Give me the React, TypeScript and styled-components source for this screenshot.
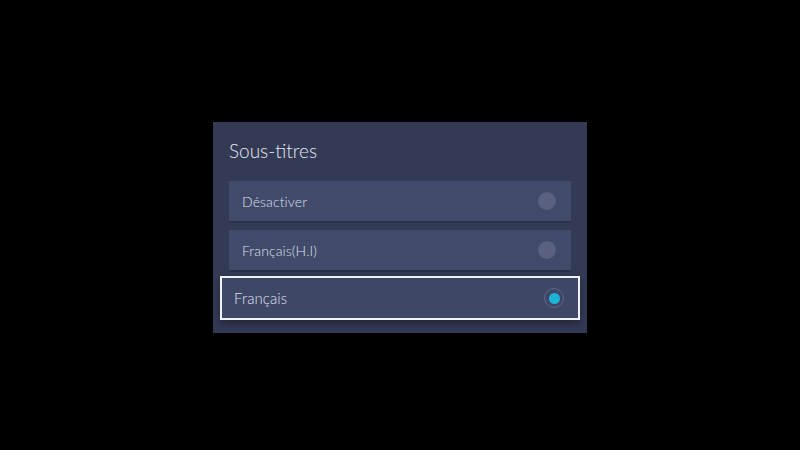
import React, { useState } from 'react';
import styled, { createGlobalStyle } from 'styled-components';

const GlobalStyle = createGlobalStyle`
  html, body {
    margin: 0;
    padding: 0;
    background: #000;
  }
  body {
    font-family: Lato, "Open Sans", sans-serif;
  }
`;

const options = ['Désactiver', 'Français(H.I)', 'Français'];

const App: React.FC = () => {
  const [selected] = useState(2);
  const focused = 2;

  return (
    <>
      <GlobalStyle />
      <Screen>
        <Panel>
          <Title>Sous-titres</Title>
          <List>
            {options.map((label, index) => (
              <Row key={`subtitle-${index}`} $focused={index === focused}>
                <Label $focused={index === focused}>{label}</Label>
                <Radio $checked={index === selected} />
              </Row>
            ))}
          </List>
        </Panel>
      </Screen>
    </>
  );
};

const Screen = styled.div`
  width: 800px;
  height: 450px;
  display: flex;
  align-items: center;
  justify-content: center;
  background: #000;
`;

const Panel = styled.div`
  width: 374px;
  height: 211px;
  box-sizing: border-box;
  margin-top: 5px;
  padding: 18px 16px 14px;
  background: #333a55;
  display: flex;
  flex-direction: column;
`;

const Title = styled.div`
  height: 41px;
  line-height: 22px;
  font-size: 19px;
  font-weight: 300;
  color: #e7e9f0;
`;

const List = styled.div`
  display: flex;
  flex-direction: column;
  gap: 9px;
`;

const Row = styled.div<{ $focused?: boolean }>`
  height: 40px;
  box-sizing: border-box;
  display: flex;
  align-items: center;
  justify-content: space-between;
  background: #414a6a;
  box-shadow: 0 2px 0 #2b3049;
  padding: 0 15px 0 13px;
  ${({ $focused }) =>
    $focused &&
    `
    height: 44px;
    margin: -3px -9px -1px;
    padding: 0 14px 0 12px;
    border: 2px solid #f2f3f7;
    background: #3f4767;
    box-shadow: 0 4px 8px rgba(0, 0, 0, 0.35);
  `}
`;

const Label = styled.span<{ $focused?: boolean }>`
  font-size: ${({ $focused }) => ($focused ? '15px' : '14px')};
  font-weight: 300;
  color: #dde0ea;
  letter-spacing: 0.1px;
`;

const Radio = styled.span<{ $checked?: boolean }>`
  width: 18px;
  height: 18px;
  border-radius: 50%;
  box-sizing: border-box;
  background: #5a6180;
  display: flex;
  align-items: center;
  justify-content: center;
  ${({ $checked }) =>
    $checked &&
    `
    width: 20px;
    height: 20px;
    background: transparent;
    border: 1px solid #5e6587;
    &::after {
      content: '';
      width: 11px;
      height: 11px;
      border-radius: 50%;
      background: #1bb3d6;
    }
  `}
`;

export default App;
